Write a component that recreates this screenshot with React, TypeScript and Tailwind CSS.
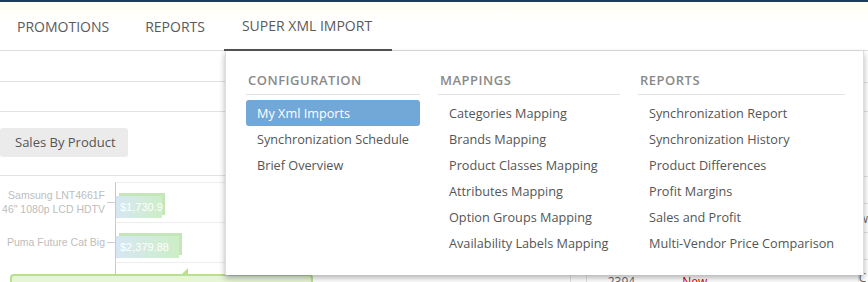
import React from 'react';

const navItems = ['Promotions', 'Reports', 'Super Xml Import'];

const columns = [
  {
    title: 'Configuration',
    width: 'w-[174px]',
    items: ['My Xml Imports', 'Synchronization Schedule', 'Brief Overview'],
  },
  {
    title: 'Mappings',
    width: 'w-[182px]',
    items: [
      'Categories Mapping',
      'Brands Mapping',
      'Product Classes Mapping',
      'Attributes Mapping',
      'Option Groups Mapping',
      'Availability Labels Mapping',
    ],
  },
  {
    title: 'Reports',
    width: 'w-[207px]',
    items: [
      'Synchronization Report',
      'Synchronization History',
      'Product Differences',
      'Profit Margins',
      'Sales and Profit',
      'Multi-Vendor Price Comparison',
    ],
  },
];

const bars = [
  { label: ['Samsung LNT4661F', '46" 1080p LCD HDTV'], value: '$1,730.9', width: 'w-[46px]' },
  { label: ['Puma Future Cat Big'], value: '$2,379.88', width: 'w-[63px]' },
];

/* chart behind the menu */
const SalesChart = () => (
  <div className="relative flex-1 pt-[6px] font-['Liberation_Sans',Arial,sans-serif]">
    {bars.map((b, i) => (
      <div key={i} className="flex h-[40px]">
        <div className="w-[107px] flex flex-col justify-center items-end text-[10.5px] leading-[14px] text-[#bdbdbd] pr-[2px]">
          {b.label.map((l) => (
            <span key={l} className="whitespace-nowrap">{l}</span>
          ))}
        </div>
        <div className="w-[8px] flex items-center">
          <div className="h-px w-full bg-[#ccc]" />
        </div>
        <div className="flex-1 border-l border-[#c8c8c8] border-t border-t-[#eee] flex items-center">
          <div className={`${b.width} h-[22px] mt-[8px] bg-gradient-to-r from-[#d6e7f4] to-[#cdeec6] shadow-[3px_-3px_0_#c4e6b9] text-white text-[11px] leading-[22px] pl-[4px] whitespace-nowrap`}>
            {b.value}
          </div>
        </div>
      </div>
    ))}
    <div className="flex h-[40px]">
      <div className="w-[107px] text-right text-[10.5px] leading-[14px] text-[#bdbdbd] pt-[12px] pr-[2px]">Samsung 1080</div>
      <div className="w-[8px]" />
      <div className="flex-1 border-l border-[#c8c8c8] border-t border-t-[#eee]" />
    </div>
    {/* tooltip */}
    <div className="absolute left-[10px] top-[98px] w-[303px] h-[22px] rounded-[4px] border-2 border-[#b9df92] bg-[#e6f5d3]">
      <div className="absolute -top-[8px] left-[168px] w-0 h-0 border-l-[8px] border-l-transparent border-b-[8px] border-b-[#b9df92]" />
    </div>
  </div>
);

export default function App() {
  return (
    <div className="relative w-[868px] h-[282px] overflow-hidden bg-white font-['Open_Sans',sans-serif] text-[#555]">
      {/* top nav */}
      <div className="border-t-2 border-[#1e3d5a] bg-gradient-to-b from-[#fffdf1] to-white to-40%">
        <nav className="flex h-[49px] border-b border-[#ddd]">
          {navItems.map((n, i) => (
            <div
              key={n}
              className={`px-[18px] flex items-center uppercase text-[14px] text-[#5a5a5a] ${i === 0 ? '-ml-px' : ''} ${
                i === 2 ? 'border-b-2 border-[#555] -mb-px ml-px pr-[20px]' : ''
              }`}
            >
              {n}
            </div>
          ))}
        </nav>
      </div>

      {/* page content behind */}
      <div className="flex">
        <div className="w-[865px] border-r border-[#e2e2e2]">
          <div className="h-[31px] border-b border-[#e2e2e2]" />
          <div className="h-[30px] border-b border-[#e2e2e2]" />
          <div className="h-[64px] border-b border-[#e2e2e2] pt-[16px]">
            <button className="h-[29px] w-[128px] rounded-[3px] bg-[#ebebeb] text-[13px] text-[#555] text-left pl-[15px]">
              Sales By Product
            </button>
          </div>
          <div className="flex h-[106px]">
            <SalesChart />
            <div className="w-[288px] flex">
              <div className="w-[17px] border-l border-r border-[#e2e2e2]" />
              <div className="flex-1 flex flex-col justify-end">
                <div className="h-[8px] flex text-[12px] leading-[16px] items-start">
                  <span className="ml-[21px] text-[#666]">2394</span>
                  <span className="ml-[47px] text-[#cc0000]">New</span>
                </div>
              </div>
            </div>
          </div>
        </div>
        <div className="flex-1 text-[12px] text-[#666]">
          <div className="h-[32px] border-b border-[#e2e2e2]" />
          <div className="h-[29px] border-b border-[#e2e2e2]" />
          <div className="h-[65px] border-b border-[#e2e2e2]" />
          <div className="h-[27px] border-b border-[#e2e2e2]" />
          <div className="h-[29px] border-b border-[#e2e2e2] leading-[29px]">w</div>
          <div className="h-[27px] border-b border-[#e2e2e2] leading-[27px]">r</div>
          <div className="leading-[36px]">C</div>
        </div>
      </div>

      {/* dropdown menu */}
      <div className="absolute left-[225px] top-[51px] w-[639px] h-[224px] bg-white border-l border-r border-[#ddd] shadow-[0_3px_6px_rgba(0,0,0,0.3)] flex gap-[18px] pl-[20px] pt-[19px]">
        {columns.map((c) => (
          <div key={c.title} className={c.width}>
            <div className="h-[25px] border-b border-[#e2e2e2] px-[2px] uppercase text-[13px] font-semibold tracking-[0.5px] leading-[20px] text-[#8a8a8a]">
              {c.title}
            </div>
            <ul className="mt-[5px]">
              {c.items.map((it, i) => (
                <li
                  key={it}
                  className={`h-[26px] leading-[26px] pl-[11px] text-[12.7px] whitespace-nowrap rounded-[3px] ${
                    c.title === 'Configuration' && i === 0 ? 'bg-[#72a8d7] text-white' : 'text-[#555]'
                  }`}
                >
                  {it}
                </li>
              ))}
            </ul>
          </div>
        ))}
      </div>
    </div>
  );
}
